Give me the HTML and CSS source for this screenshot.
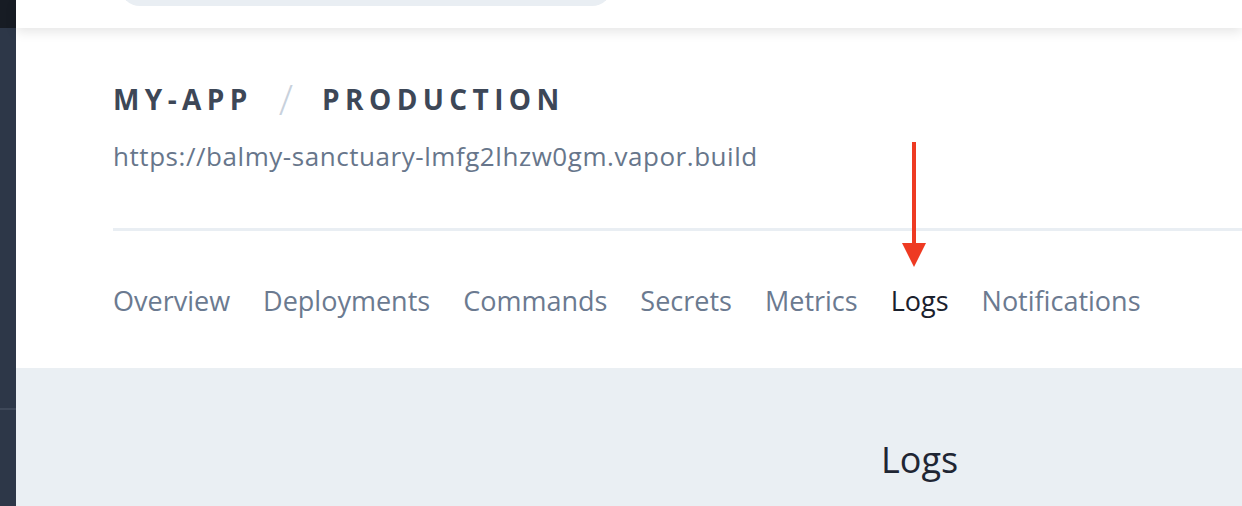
FILE: index.html
```html
<!DOCTYPE html>
<html>
<head>
<meta charset="utf-8">
<link rel="stylesheet" href="styles.css">
</head>
<body>
<div class="app">
  <aside class="sidebar">
    <div class="sidebar-top"></div>
    <div class="sidebar-body"><div class="sidebar-rule"></div></div>
  </aside>
  <main class="main">
    <div class="topbar">
      <div class="search"></div>
    </div>
    <header class="header">
      <h1 class="crumbs"><span>MY-APP</span><span class="sep">/</span><span>PRODUCTION</span></h1>
      <div class="url">https://balmy-sanctuary-lmfg2lhzw0gm.vapor.build</div>
      <div class="rule"></div>
      <nav class="tabs">
        <a>Overview</a>
        <a>Deployments</a>
        <a>Commands</a>
        <a>Secrets</a>
        <a>Metrics</a>
        <a class="active">Logs</a>
        <a>Notifications</a>
      </nav>
      <svg class="arrow" width="24" height="125" viewBox="0 0 24 125"><rect x="10" y="0" width="4" height="104" fill="#ee3a22"/><polygon points="0,101 24,101 12,125" fill="#ee3a22"/></svg>
    </header>
    <section class="content">
      <h2 class="page-title">Logs</h2>
    </section>
  </main>
</div>
</body>
</html>
```
FILE: styles.css
```css
* { box-sizing: border-box; }
html, body { margin: 0; padding: 0; }
body {
  font-family: "Open Sans", Lato, sans-serif;
  background: #eaeff3;
  width: 1242px;
  height: 506px;
  overflow: hidden;
}
.app { display: flex; height: 506px; }
.sidebar { width: 16px; flex: none; display: flex; flex-direction: column; }
.sidebar-top { height: 28px; background: #171c24; }
.sidebar-body { flex: 1; background: #2d3748; padding-top: 380px; }
.sidebar-rule { height: 2px; background: #3e4859; }
.main { flex: 1; display: flex; flex-direction: column; min-width: 0; }
.topbar {
  height: 28px;
  flex: none;
  background: #fff;
  padding-left: 104px;
  position: relative;
  z-index: 2;
  box-shadow: 0 4px 12px rgba(0,0,0,0.10);
}
.search {
  width: 492px;
  height: 40px;
  margin-top: -34px;
  background: #e9eef3;
  border-radius: 20px;
}
.header {
  background: #fff;
  padding: 57px 0 0 97px;
  height: 340px;
  flex: none;
  position: relative;
}
.crumbs {
  margin: 0;
  font-size: 28px;
  font-weight: 700;
  letter-spacing: 5.4px;
  color: #3d4757;
  line-height: 28px;
  height: 28px;
  display: flex;
  align-items: center;
}
.crumbs .sep {
  color: #c8d1dc;
  font-weight: 300;
  margin: 0 29px 0 26px;
  letter-spacing: 0;
  font-size: 42px;
  line-height: 28px;
}
.url {
  margin-top: 28px;
  font-size: 26px;
  letter-spacing: 0.55px;
  color: #67768b;
  line-height: 30px;
}
.rule {
  margin-top: 57px;
  height: 3px;
  background: #e9eef3;
}
.tabs {
  display: flex;
  gap: 33px;
  margin-top: 54px;
  font-size: 27px;
  color: #6b7a90;
  line-height: 32px;
}
.tabs a.active { color: #1a202c; }
.arrow {
  position: absolute;
  left: 886px;
  top: 114px;
}
.content {
  flex: 1;
  padding-left: 865px;
}
.page-title {
  margin: 70px 0 0 0;
  font-size: 36px;
  font-weight: 400;
  color: #1f2633;
  line-height: 44px;
}
```
